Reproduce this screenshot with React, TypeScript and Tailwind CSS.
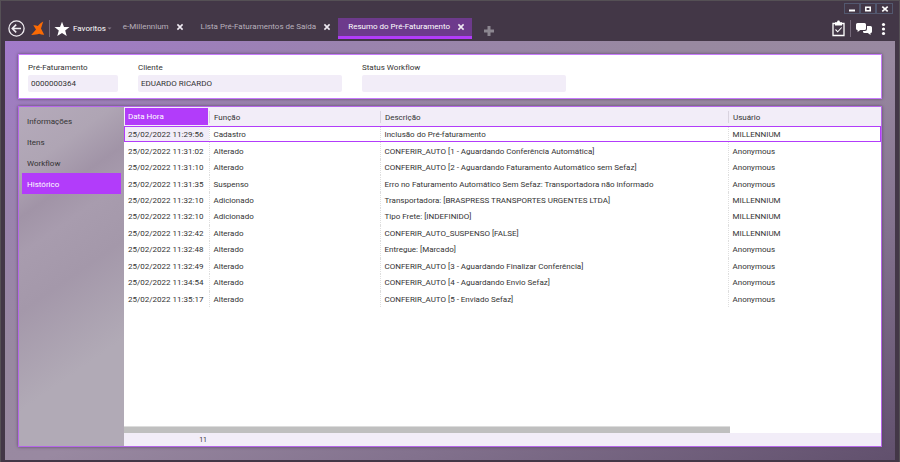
import React, { useState } from "react";
import clsx from "clsx";

const tabs = [
  { id: "home", label: "e-Millennium" },
  { id: "list", label: "Lista Pré-Faturamentos de Saída" },
  { id: "summary", label: "Resumo do Pré-Faturamento" },
];

const sections = ["Informações", "Itens", "Workflow", "Histórico"];

const history = [
  ["25/02/2022 11:29:56", "Cadastro", "Inclusão do Pré-faturamento", "MILLENNIUM"],
  ["25/02/2022 11:31:02", "Alterado", "CONFERIR_AUTO [1 - Aguardando Conferência Automática]", "Anonymous"],
  ["25/02/2022 11:31:10", "Alterado", "CONFERIR_AUTO [2 - Aguardando Faturamento Automático sem Sefaz]", "Anonymous"],
  ["25/02/2022 11:31:35", "Suspenso", "Erro no Faturamento Automático Sem Sefaz: Transportadora não informado", "Anonymous"],
  ["25/02/2022 11:32:10", "Adicionado", "Transportadora: [BRASPRESS TRANSPORTES URGENTES LTDA]", "MILLENNIUM"],
  ["25/02/2022 11:32:10", "Adicionado", "Tipo Frete: [INDEFINIDO]", "MILLENNIUM"],
  ["25/02/2022 11:32:42", "Alterado", "CONFERIR_AUTO_SUSPENSO [FALSE]", "MILLENNIUM"],
  ["25/02/2022 11:32:48", "Alterado", "Entregue: [Marcado]", "Anonymous"],
  ["25/02/2022 11:32:49", "Alterado", "CONFERIR_AUTO [3 - Aguardando Finalizar Conferência]", "Anonymous"],
  ["25/02/2022 11:34:54", "Alterado", "CONFERIR_AUTO [4 - Aguardando Envio Sefaz]", "Anonymous"],
  ["25/02/2022 11:35:17", "Alterado", "CONFERIR_AUTO [5 - Enviado Sefaz]", "Anonymous"],
];

const CloseIcon = () => (
  <svg viewBox="0 0 8 8" className="size-2" fill="none" stroke="currentColor" strokeWidth="1.6">
    <path d="M1.4 1.4 6.6 6.6M6.6 1.4 1.4 6.6" />
  </svg>
);

const WindowButtons = () => (
  <div className="flex justify-end pr-1.5 pt-0.5 text-white">
    <button aria-label="Minimizar" className="flex h-[11px] w-4 items-center justify-center border border-[#53586f]">
      <svg viewBox="0 0 8 8" className="size-2" fill="currentColor">
        <path d="M1 4.5h6v2H1z" />
      </svg>
    </button>
    <button aria-label="Maximizar" className="flex h-[11px] w-4 items-center justify-center border border-[#53586f]">
      <svg viewBox="0 0 8 8" className="size-2" fill="none" stroke="currentColor" strokeWidth="1.6">
        <path d="M1.8 2.3h4.4v3.4H1.8z" />
      </svg>
    </button>
    <button aria-label="Fechar" className="flex h-[11px] w-[17px] items-center justify-center border border-[#53586f]">
      <svg viewBox="0 0 8 8" className="size-2" fill="none" stroke="currentColor" strokeWidth="1.7">
        <path d="M1.3 1.7 6.7 6.3M6.7 1.7 1.3 6.3" />
      </svg>
    </button>
  </div>
);

const Toolbar = () => {
  const [active, setActive] = useState("summary");

  return (
    <div className="flex h-[27px] items-center pl-[7px] pr-[13px] pt-0.5 text-white">
      <button aria-label="Voltar">
        <svg viewBox="0 0 17 17" className="size-[17px]" fill="none" stroke="#f0edf2" strokeWidth="1.3">
          <circle cx="8.5" cy="8.5" r="7.6" />
          <path d="M13 8.5H4.6M8.2 4.6 4.3 8.5l3.9 3.9" strokeWidth="1.6" />
        </svg>
      </button>
      <svg viewBox="0 0 14 15" className="ml-1.5 h-[15px] w-3.5" fill="#fb6a04">
        <path d="M12.2.5 10 7.5l3.200 6.200c-2 .1-3.500-.2-5-.9-2.200.7-4.500 1.300-8 1.200L5 8.500 2.300 4.300c1.700-.2 3 .1 4.500.7C8.300 3.300 10 1.700 12.200.5Z" />
      </svg>
      <div className="ml-1 h-[17px] w-px bg-[#75697a]" />
      <button className="ml-1 flex items-center text-[8px] leading-3">
        <svg viewBox="0 0 16 16" className="mr-[3px] size-4" fill="white">
          <path d="m8 .7 2 5.200 5.500.2-4.300 3.400 1.500 5.500L8 11.900 3.300 15l1.500-5.500L.5 6.100 6 5.900Z" />
        </svg>
        Favoritos
        <svg viewBox="0 0 5 5" className="ml-px size-[5px]" fill="#857a8a">
          <path d="M.5 1.500h4L2.500 3.500z" />
        </svg>
      </button>
      <div role="tablist" className="ml-px flex items-center self-stretch py-0.5">
        {tabs.map((tab) => (
          <div
            key={tab.id}
            className={clsx(
              "flex h-[21px] items-center border-b-[3px] pl-2.5 pr-[7px]",
              active === tab.id ? "border-[#b23cfa] bg-[#6d3a8c]" : "border-transparent text-[#b8b0bc]"
            )}
          >
            <button
              role="tab"
              aria-selected={active === tab.id}
              onClick={() => setActive(tab.id)}
              className="whitespace-nowrap text-[8px] leading-3"
            >
              {tab.label}
            </button>
            <button aria-label={"Fechar " + tab.label} className="ml-[7px] text-[#efeaf2]">
              <CloseIcon />
            </button>
          </div>
        ))}
      </div>
      <button aria-label="Nova aba" className="ml-3 mt-1">
        <svg viewBox="0 0 10 10" className="size-2.5" fill="#8c8690">
          <path d="M3.500 0h3v3.500H10v3H6.500V10h-3V6.500H0v-3h3.500z" />
        </svg>
      </button>
      <div className="ml-auto flex items-center">
        <button aria-label="Tarefas">
          <svg viewBox="0 0 13 17" className="h-[17px] w-[13px]" fill="none" stroke="white">
            <path d="M1 3.500h11v12H1z" strokeWidth="1.300" />
            <path d="M3 2.200h2C5.200.9 5.700.500 6.500.500S7.800.9 8 2.200h2v3.300H3z" fill="white" stroke="none" />
            <path d="m3.500 9.500 2.200 2.300 4-4.300" strokeWidth="1.100" />
          </svg>
        </button>
        <div className="ml-[5px] h-[17px] w-px bg-[#75697a]" />
        <button aria-label="Mensagens" className="ml-1">
          <svg viewBox="0 0 18 14" className="h-3.5 w-[18px]" fill="white">
            <path d="M2.500 1h7Q11 1 11 2.500v4Q11 8 9.500 8H5.300L2.600 10V8H2.500Q1 8 1 6.500v-4Q1 1 2.500 1Z" />
            <path d="M12 4h3.500Q17 4 17 5.500v4Q17 11 15.500 11v2L12.800 11H9.500Q8 11 8 9.500V9h2q2 0 2-2Z" />
          </svg>
        </button>
        <button aria-label="Mais opções" className="ml-2">
          <svg viewBox="0 0 5 14" className="h-3.5 w-[5px]" fill="white">
            <circle cx="2.500" cy="2.500" r="1.600" />
            <circle cx="2.500" cy="7" r="1.600" />
            <circle cx="2.500" cy="11.500" r="1.600" />
          </svg>
        </button>
      </div>
    </div>
  );
};

type FieldProps = { id: string; label: string; value: string; className: string };

const Field: React.FC<FieldProps> = ({ id, label, value, className }) => (
  <div className={className}>
    <label htmlFor={id} className="block leading-3">
      {label}
    </label>
    <input
      id={id}
      readOnly
      defaultValue={value}
      className="mt-px block h-[17px] w-full rounded-xs bg-[#f2edf8] px-[3px] outline-none"
    />
  </div>
);

const HistoryTable = () => (
  <table className="h-[200px] w-full table-fixed border-collapse text-left">
    <colgroup>
      <col className="w-[85px]" />
      <col className="w-[171px]" />
      <col className="w-[348px]" />
      <col />
    </colgroup>
    <thead>
      <tr className="h-[19px] bg-[#f2edf8]">
        {["Data Hora", "Função", "Descrição", "Usuário"].map((title, i) => (
          <th key={title} className="p-0 font-normal">
            {i === 0 ? (
              <div className="ml-px mr-px h-[17px] bg-[#b23cfa] pl-[3px] leading-[18px] text-white">{title}</div>
            ) : (
              <div className="h-3 border-l border-[#d9d3df] pl-1 leading-[14px]">{title}</div>
            )}
          </th>
        ))}
      </tr>
    </thead>
    <tbody>
      {history.map((row, i) => (
        <tr key={i} className={clsx(i === 0 && "outline outline-1 -outline-offset-1 outline-[#b23cfa]")}>
          {row.map((cell, j) => (
            <td
              key={j}
              className={clsx(
                "whitespace-nowrap p-0 pl-1 pt-0.5 leading-3",
                j > 0 && "border-l border-dotted border-[#dedede]",
                i === 0 && j === 0 && "bg-[#f2edf8]"
              )}
            >
              {cell}
            </td>
          ))}
        </tr>
      ))}
    </tbody>
  </table>
);

export default function App() {
  const [section, setSection] = useState("Histórico");

  return (
    <div className="flex min-h-screen flex-col border-x border-t border-[#555055] bg-[#433747] font-[Roboto,sans-serif] text-[8px] text-[#333333]">
      <header>
        <WindowButtons />
        <Toolbar />
      </header>
      <main className="mx-1 mb-0.5 flex flex-1 flex-col gap-[7px] bg-[linear-gradient(to_bottom_right,#a27acb_0%,#9a83ae_20%,#9889a0_38%,#9989a1_52%,#83728e_72%,#61506d_100%)] p-[13px]">
        <section className="flex h-[45px] gap-5 border border-[#c77bfb] bg-white px-[9px] pt-[7px] shadow-[0_0_3px_#5b4568]">
          <Field id="code" label="Pré-Faturamento" value="0000000364" className="w-[90px]" />
          <Field id="client" label="Cliente" value="EDUARDO RICARDO" className="w-[204px]" />
          <Field id="status" label="Status Workflow" value="" className="w-[204px]" />
        </section>
        <section className="flex flex-1 border border-[#b566e8] bg-white shadow-[0_0_3px_#5b4568]">
          <nav className="flex w-[105px] shrink-0 flex-col bg-[linear-gradient(145deg,#b5aabb_0%,#afa5b4_16%,#a194a7_27%,#a89cae_36%,#a498aa_50%,#b1aab6_74%,#b1aab6_100%)] p-[3px]">
            {sections.map((name) => (
              <button
                key={name}
                onClick={() => setSection(name)}
                className={clsx("h-[21px] pl-[5px] pt-0.5 text-left leading-3", section === name && "bg-[#b23cfa] text-white")}
              >
                {name}
              </button>
            ))}
          </nav>
          <div className="flex min-w-0 flex-1 flex-col">
            <HistoryTable />
            <div className="mt-auto h-[7px] w-4/5 border-t border-[#dcdcdc] bg-[#bfbfbf]" />
            <footer className="h-[13px] bg-[#f2edf8]">
              <div className="w-[83px] text-right text-[7px] leading-[15px]">{history.length}</div>
            </footer>
          </div>
        </section>
      </main>
    </div>
  );
}
